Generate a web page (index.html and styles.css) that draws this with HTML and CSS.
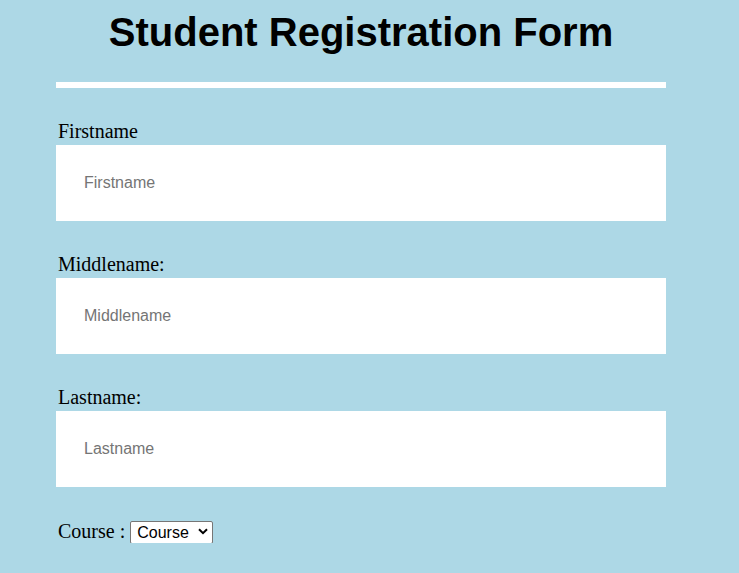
FILE: index.html
```html
<!DOCTYPE html>
<html>
<head>
<meta charset="utf-8">
<title>Student Registration Form</title>
<link rel="stylesheet" href="styles.css">
</head>
<body>
<div class="form">
  <h1 class="title">Student Registration Form</h1>
  <div class="rule"></div>
  <label class="label" for="fn">Firstname</label>
  <input class="field" id="fn" type="text" placeholder="Firstname">
  <label class="label" for="mn">Middlename:</label>
  <input class="field" id="mn" type="text" placeholder="Middlename">
  <label class="label" for="ln">Lastname:</label>
  <input class="field" id="ln" type="text" placeholder="Lastname">
  <div class="course-row">
    <span class="course-label">Course :</span>
    <span class="select-wrap">
      <select class="course-select"><option>Course</option></select>
      <svg class="chevron" width="10" height="7" viewBox="0 0 10 7"><path d="M1 1.2 L5 5.2 L9 1.2" fill="none" stroke="#000" stroke-width="2"/></svg>
    </span>
  </div>
</div>
</body>
</html>
```
FILE: styles.css
```css
html, body {
  margin: 0;
  padding: 0;
  background: #add8e6;
}
body {
  font-family: "Liberation Serif", serif;
  font-size: 20px;
  color: #000;
}
.form {
  width: 610px;
  margin-left: 56px;
  padding-top: 9px;
}
.title {
  margin: 0;
  font-family: "Liberation Sans", Arial, sans-serif;
  font-weight: bold;
  font-size: 40px;
  line-height: 46px;
  text-align: center;
}
.rule {
  margin-top: 27px;
  height: 6px;
  background: #fff;
}
.label {
  display: block;
  margin-top: 34px;
  padding-left: 2px;
  height: 23px;
  line-height: 19px;
}
.field {
  display: block;
  box-sizing: border-box;
  width: 610px;
  height: 76px;
  margin: 0;
  padding: 0 28px;
  border: none;
  outline: none;
  background: #fff;
  font-family: "Liberation Sans", Arial, sans-serif;
  font-size: 16px;
}
.field::placeholder {
  color: #757575;
}
.course-row {
  margin-top: 33px;
  padding-left: 2px;
  display: flex;
  align-items: center;
  gap: 5px;
  height: 23px;
}
.course-label {
  line-height: 23px;
}
.select-wrap {
  position: relative;
  display: inline-block;
  height: 23px;
}
.course-select {
  -webkit-appearance: none;
  appearance: none;
  box-sizing: border-box;
  width: 83px;
  height: 23px;
  margin: 0;
  padding: 0 0 0 6px;
  border: 1px solid #767676;
  border-radius: 2px;
  background: #fff;
  color: #000;
  font-family: "Liberation Sans", Arial, sans-serif;
  font-size: 16px;
  line-height: 21px;
}
.chevron {
  position: absolute;
  left: 68px;
  top: 8px;
  pointer-events: none;
}
```
